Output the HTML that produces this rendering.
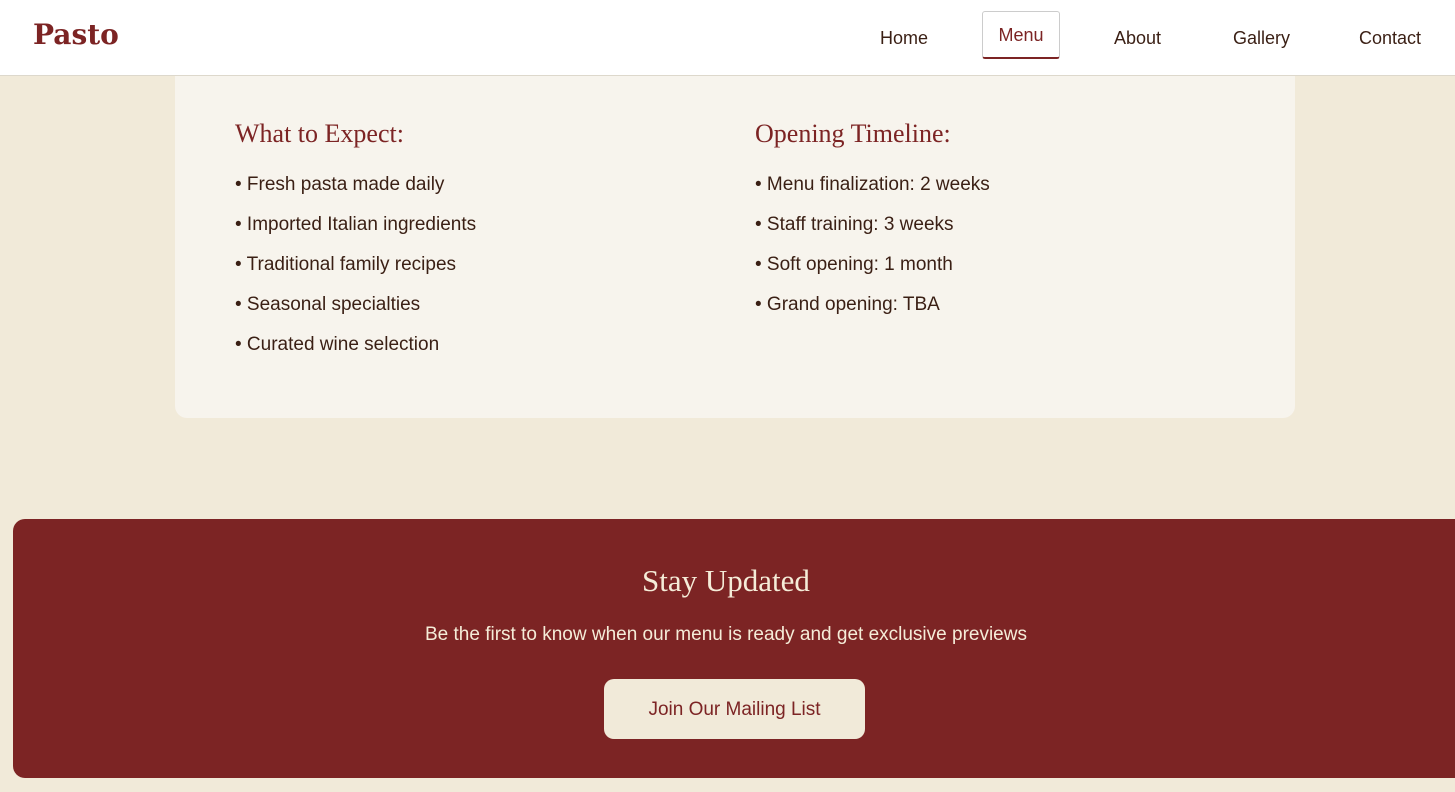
<!DOCTYPE html>
<html><head><style>
body{margin:0;width:1455px;height:792px;background:#f1ead9;font-family:"Liberation Sans",sans-serif;position:relative;overflow:hidden;color:#3a1f14}
.hdr{position:absolute;left:0;top:0;width:1455px;height:75px;background:#fff;border-bottom:1px solid #ddd8cc;z-index:2}
.logo{position:absolute;left:33px;top:18px;font-family:"DejaVu Serif",serif;font-weight:bold;font-size:28px;color:#7c2424}
.nav a{position:absolute;top:28px;font-size:18px;color:#3a1f14}
.menu{position:absolute;left:982px;top:11px;width:78px;height:48px;border:1px solid #ccc;border-bottom:2px solid #7c2424;border-radius:3px;box-sizing:border-box;color:#7c2424;font-size:18px;text-align:center;line-height:46px}
.card{position:absolute;left:175px;top:40px;width:1120px;height:378px;background:#f7f4ed;border-radius:12px}
h3{position:absolute;margin:0;font-family:"Liberation Serif",serif;font-weight:normal;font-size:26px;color:#7c2424;top:79px}
ul{position:absolute;margin:0;padding:0;list-style:none;top:134px;font-size:19px}
li{height:40px}
.ban{position:absolute;left:13px;top:519px;width:1442px;height:259px;background:#7c2424;border-radius:12px 0 0 12px;text-align:center;color:#f5ecd8}
.ban h2{margin:0;position:absolute;top:44px;width:100%;left:-8px;font-family:"Liberation Serif",serif;font-weight:normal;font-size:31px}
.ban p{margin:0;position:absolute;top:105px;width:100%;left:-8px;font-size:19px}
.btn{position:absolute;left:591px;top:160px;width:261px;height:60px;background:#f1ead9;border-radius:10px;color:#7c2424;font-size:19px;line-height:62px}
</style></head><body>
<div class="hdr"><div class="logo">Pasto</div>
<div class="nav"><a style="left:880px">Home</a><div class="menu">Menu</div><a style="left:1114px">About</a><a style="left:1233px">Gallery</a><a style="left:1359px">Contact</a></div></div>
<div class="card">
<h3 style="left:60px">What to Expect:</h3>
<ul style="left:60px"><li>• Fresh pasta made daily</li><li>• Imported Italian ingredients</li><li>• Traditional family recipes</li><li>• Seasonal specialties</li><li>• Curated wine selection</li></ul>
<h3 style="left:580px">Opening Timeline:</h3>
<ul style="left:580px"><li>• Menu finalization: 2 weeks</li><li>• Staff training: 3 weeks</li><li>• Soft opening: 1 month</li><li>• Grand opening: TBA</li></ul>
</div>
<div class="ban"><h2>Stay Updated</h2><p>Be the first to know when our menu is ready and get exclusive previews</p><div class="btn">Join Our Mailing List</div></div>
</body></html>
